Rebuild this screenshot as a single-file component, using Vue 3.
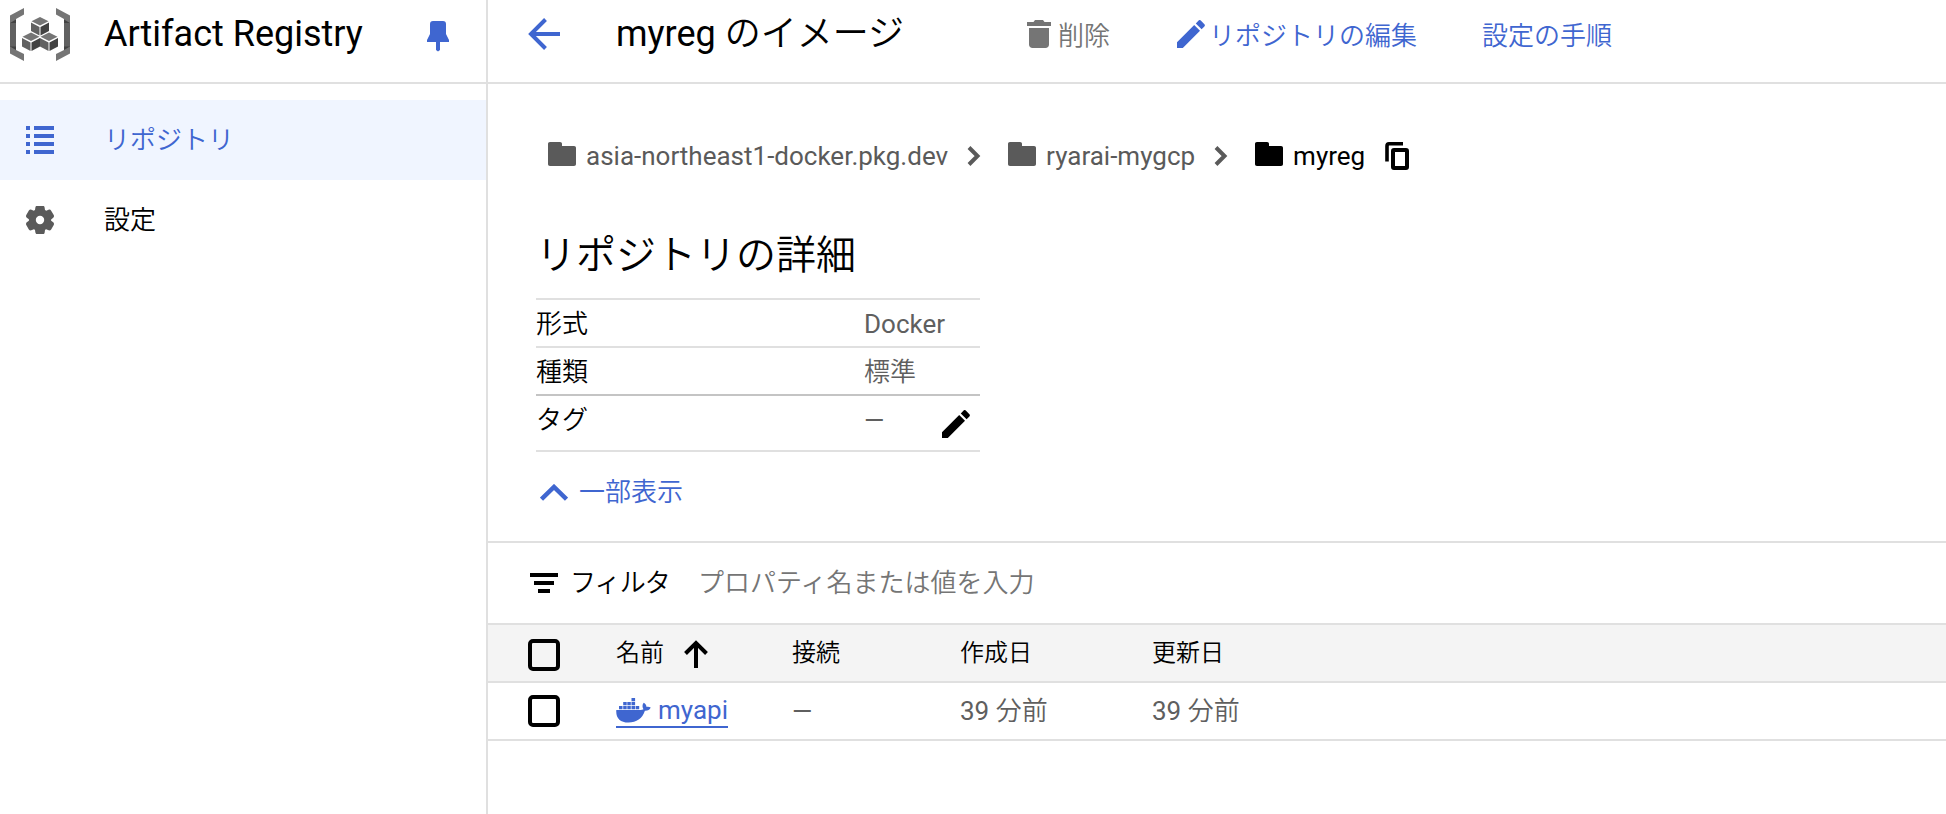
<script setup>
const nav = [
  { id: 'repo', label: 'リポジトリ', active: true },
  { id: 'settings', label: '設定', active: false },
]
const crumbs = [
  { label: 'asia-northeast1-docker.pkg.dev', current: false },
  { label: 'ryarai-mygcp', current: false },
  { label: 'myreg', current: true },
]
const details = [
  { key: '形式', value: 'Docker' },
  { key: '種類', value: '標準' },
]
const pencil = 'M0 28v-5.8L17.2 5l5.8 5.8L5.8 28H0zM27.4 6.4a1.6 1.6 0 0 0 0-2.2L23.8.5a1.6 1.6 0 0 0-2.2 0L18.8 3.4l5.8 5.8 2.8-2.8z'
</script>

<template>
  <div class="page">
    <aside class="side">
      <header class="bar brand">
        <svg class="logo" width="60" height="54" viewBox="0 0 60 54">
          <path d="M0 7.500L14 0v6.500L6 11v31l8 4v7L0 45.500z" fill="#757575" />
          <path d="M60 7.500L46 0v6.500L54 11v31l-8 4v7l14-7.500z" fill="#757575" />
          <path d="M0 15h6v24H0zM54 15h6v24h-6z" fill="#616161" />
          <path d="M0 15l6-3.500V15zM0 38.500h6V42zM60 15l-6-3.500V15zM60 38.500h-6V42z" fill="#424242" />
          <g v-for="p in [[30, 9], [21, 24.500], [39, 24.500]]" :key="p[0]" :transform="`translate(${p[0]} ${p[1]})`">
            <path d="M0 0l8.500 4.200L0 8.600l-8.500-4.400z" fill="#757575" />
            <path d="M-9 5.500l8.500 4.400V18.500L-9 14z" fill="#616161" />
            <path d="M9 5.500L.5 9.900V18.500L9 14z" fill="#424242" />
          </g>
        </svg>
        <span class="brand-name">Artifact Registry</span>
        <svg class="pin" width="22" height="31" viewBox="0 0 22 31">
          <path d="M6 0h10c2 0 3 1 3 3v10l3 6v2H13v8l-2 1.500L9 29v-8H0v-2l3-6V3c0-2 1-3 3-3z" fill="currentColor" />
        </svg>
      </header>
      <nav class="nav">
        <a v-for="n in nav" :key="n.id" class="nav-item" :class="{ active: n.active }">
          <svg v-if="n.id === 'repo'" width="28" height="28" viewBox="0 0 28 28" fill="currentColor">
            <path d="M0 0h4v4H0zM8 0h20v4H8zM0 8h4v4H0zM8 8h20v4H8zM0 16h4v4H0zM8 16h20v4H8zM0 24h4v4H0zM8 24h20v4H8z" />
          </svg>
          <svg v-else class="gear" width="28" height="28" viewBox="2 2 20 20" fill="currentColor">
            <path d="M13.850 22.250h-3.700c-.74 0-1.360-.54-1.450-1.270l-.27-1.890c-.27-.14-.53-.29-.79-.46l-1.800.72c-.7.26-1.470-.03-1.810-.65L2.200 15.530c-.35-.66-.2-1.440.36-1.880l1.530-1.190c-.01-.15-.02-.3-.02-.46s.01-.31.02-.46l-1.520-1.190c-.59-.45-.74-1.260-.37-1.880l1.850-3.190c.34-.62 1.110-.9 1.790-.63l1.810.73c.26-.17.52-.32.78-.46l.27-1.910c.09-.7.71-1.250 1.440-1.250h3.700c.74 0 1.360.54 1.450 1.270l.27 1.890c.27.14.53.29.79.46l1.800-.72c.71-.26 1.480.03 1.820.65l1.840 3.180c.36.66.2 1.440-.36 1.880l-1.520 1.190c.01.15.02.3.02.46s-.01.31-.02.46l1.520 1.190c.56.450.72 1.230.37 1.860l-1.860 3.220c-.34.620-1.110.900-1.800.630l-1.800-.72c-.26.170-.52.320-.78.460l-.27 1.910c-.1.680-.72 1.220-1.460 1.220zM12 9a3 3 0 1 0 0 6 3 3 0 0 0 0-6z" />
          </svg>
          <span class="ja">{{ n.label }}</span>
        </a>
      </nav>
    </aside>

    <main class="main">
      <header class="bar top">
        <svg class="back" width="32" height="32" viewBox="0 0 32 32" fill="none" stroke="currentColor" stroke-width="4">
          <path d="M32 16H3M17.500 1.500L3 16l14.500 14.500" />
        </svg>
        <h1 class="title">myreg <span class="ja">のイメージ</span></h1>
        <a class="action muted">
          <svg width="24" height="28" viewBox="0 0 24 28" fill="currentColor">
            <path d="M0 2h6.500L8 0h8l1.500 2H24v4H0zM2 8h20v16.500c0 2-1.500 3.500-3.500 3.500h-13C3.500 28 2 26.500 2 24.500z" />
          </svg>
          <span class="ja">削除</span>
        </a>
        <a class="action edit">
          <svg width="28" height="28" viewBox="0 0 28 28" fill="currentColor"><path :d="pencil" /></svg>
          <span class="ja">リポジトリの編集</span>
        </a>
        <a class="action steps"><span class="ja">設定の手順</span></a>
      </header>

      <div class="crumbs">
        <template v-for="(c, i) in crumbs" :key="c.label">
          <svg v-if="i" class="sep" width="14" height="20" viewBox="0 0 14 20" fill="none" stroke="currentColor" stroke-width="4">
            <path d="M2 1.500L10.500 10 2 18.500" />
          </svg>
          <span class="crumb" :class="{ current: c.current }">
            <svg width="28" height="24" viewBox="0 0 28 24" fill="currentColor">
              <path d="M2 0h10c1.300 0 2 .7 2 2v2h12c1.300 0 2 .7 2 2v16c0 1.300-.7 2-2 2H2c-1.300 0-2-.7-2-2V2C0 .7.700 0 2 0z" />
            </svg>
            <span>{{ c.label }}</span>
          </span>
        </template>
        <svg class="copy" width="24" height="28" viewBox="0 0 24 28">
          <path d="M18 1.800H4C2.600 1.800 2 2.600 2 4v15.500" fill="none" stroke="#000" stroke-width="3.600" />
          <rect x="8" y="8" width="14" height="18" rx="1" fill="none" stroke="#000" stroke-width="4" />
        </svg>
      </div>

      <h2 class="heading ja">リポジトリの詳細</h2>

      <dl class="details">
        <div v-for="d in details" :key="d.key" class="detail">
          <dt class="ja">{{ d.key }}</dt>
          <dd :class="{ ja: d.value !== 'Docker' }">{{ d.value }}</dd>
        </div>
        <div class="detail tag">
          <dt class="ja">タグ</dt>
          <dd><span class="dash">—</span></dd>
          <svg class="tag-edit" width="28" height="28" viewBox="0 0 28 28"><path :d="pencil" /></svg>
        </div>
      </dl>

      <a class="less">
        <svg width="28" height="17" viewBox="0 0 28 17" fill="none" stroke="currentColor" stroke-width="4.500">
          <path d="M1.500 15.200L14 3l12.500 12.200" />
        </svg>
        <span class="ja">一部表示</span>
      </a>

      <div class="filter">
        <svg width="28" height="20" viewBox="0 0 28 20"><path d="M0 0h28v4H0zM4 8h20v4H4zM8 16h12v4H8z" /></svg>
        <span class="ja filter-label">フィルタ</span>
        <span class="ja placeholder">プロパティ名または値を入力</span>
      </div>

      <div class="row head">
        <span class="check"></span>
        <span class="name ja">名前
          <svg class="up" width="24" height="28" viewBox="0 0 24 28" fill="none" stroke="#000" stroke-width="4">
            <path d="M12 28V3M1.500 13.500L12 3l10.500 10.500" />
          </svg>
        </span>
        <span class="ja">接続</span>
        <span class="ja">作成日</span>
        <span class="ja">更新日</span>
      </div>
      <div class="row body">
        <span class="check"></span>
        <span class="name">
          <a class="link">
            <svg width="35" height="25" viewBox="0 0 35 25" fill="currentColor">
              <path d="M15.500 0h3.600v3.300h-3.600zM7.200 4h3.500v3.200H7.200zM11.300 4h3.500v3.200h-3.500zM15.500 4h3.600v3.200h-3.600zM3 7.900h3.500v3.300H3zM7.200 7.900h3.500v3.300H7.200zM11.300 7.900h3.500v3.300h-3.500zM15.500 7.900h3.600v3.300h-3.600zM19.700 7.900h3.500v3.300h-3.500z" />
              <path d="M.3 12h24.200c1.200 0 2.200-.2 3-.7-1.400-2-1.300-4.800.2-6.600 1.700 1 2.700 2.400 2.900 4.200 1.500-.3 2.900-.1 4.100.7-.9 2.300-3 3.300-5.800 3.200C26.300 20.800 20.500 24.500 12.500 24.500 4 24.500-.3 20 .3 12z" />
            </svg>
            <span>myapi</span>
          </a>
        </span>
        <span><span class="dash">—</span></span>
        <span>39 <span class="ja">分前</span></span>
        <span>39 <span class="ja">分前</span></span>
      </div>
    </main>
  </div>
</template>

<style>
body { background: #fff; }
</style>

<style scoped>
.page {
  display: grid;
  grid-template-columns: 488px 1fr;
  height: 814px;
  overflow: hidden;
  font-family: Roboto, "Noto Sans CJK JP", sans-serif;
  font-size: 26px;
  line-height: 36px;
  color: #000;
  white-space: nowrap;
}
.ja { font-weight: 350; }
.dash { font-size: 26px; }
svg { display: block; flex: none; }
.side { box-sizing: border-box; border-right: 2px solid #e0e0e0; }
.bar {
  box-sizing: border-box;
  height: 84px;
  border-bottom: 2px solid #e0e0e0;
  display: flex;
  align-items: flex-start;
}
.brand { padding-left: 10px; }
.logo { margin-top: 8px; }
.brand-name { margin: 12px 0 0 34px; font-size: 36px; line-height: 44px; width: 323px; }
.pin { margin-top: 21px; color: #3f66d0; }
.nav { padding-top: 16px; }
.nav-item {
  display: flex;
  align-items: center;
  height: 80px;
  padding-left: 26px;
  gap: 50px;
}
.nav-item.active { background: #f0f5ff; color: #3f66d0; }
.gear { color: #5a5a5a; }

.top { padding-left: 40px; color: #3f66d0; }
.back { margin-top: 18px; }
.title {
  margin: 12px 0 0 56px;
  width: 411px;
  font-size: 36px;
  line-height: 44px;
  font-weight: 400;
  color: #000;
}
.action { display: flex; align-items: center; gap: 7px; margin-top: 16px; }
.action .ja { padding-top: 2px; margin-bottom: -2px; }
.action.muted { color: #757575; width: 150px; }
.edit { width: 305px; gap: 4px; }

.crumbs { display: flex; align-items: center; margin: 52px 0 0 60px; height: 40px; color: #5a5a5a; }
.crumb { display: flex; align-items: center; gap: 10px; }
.crumb svg { margin-bottom: 4px; }
.crumb.current { color: #000; }
.sep { margin: 0 27px 0 19px; }
.copy { margin-left: 20px; }

.heading { margin: 50px 0 0 48px; font-size: 40px; line-height: 60px; }
.details { width: 444px; margin: 12px 0 0 48px; border-top: 2px solid #e0e0e0; }
.detail { display: flex; height: 46px; border-bottom: 2px solid #e0e0e0; line-height: 48px; }
.detail:nth-child(2) { border-bottom-color: #c4c4c4; }
.detail dt { width: 328px; }
.detail dd { margin: 0; width: 78px; color: #5f5f5f; }
.detail.tag { height: 54px; }
.tag-edit { margin-top: 14px; }

.less { display: flex; align-items: center; gap: 11px; margin: 22px 0 0 52px; color: #3f66d0; width: max-content; }

.filter {
  display: flex;
  align-items: center;
  height: 80px;
  margin-top: 31px;
  padding-left: 42px;
  border-top: 2px solid #e0e0e0;
  border-bottom: 2px solid #e0e0e0;
}
.filter svg { margin-bottom: 1px; }
.filter-label { margin-left: 12px; width: 128px; letter-spacing: -0.9px; }
.placeholder { color: #757575; }
.row {
  display: grid;
  grid-template-columns: 88px 176px 168px 192px 1fr;
  align-items: center;
  height: 56px;
  padding-left: 40px;
  border-bottom: 2px solid #e0e0e0;
  color: #5f5f5f;
}
.row.head { background: #f4f4f4; color: #000; font-size: 24px; }
.check { box-sizing: border-box; width: 32px; height: 32px; border: 4px solid #000; border-radius: 5px; }
.head .check { margin-top: 4px; }
.name { display: flex; align-items: center; gap: 20px; }
.up { margin-top: 2px; }
.link { display: flex; align-items: center; gap: 7px; color: #3f66d0; border-bottom: 2px solid #3f66d0; line-height: 32px; }
</style>
